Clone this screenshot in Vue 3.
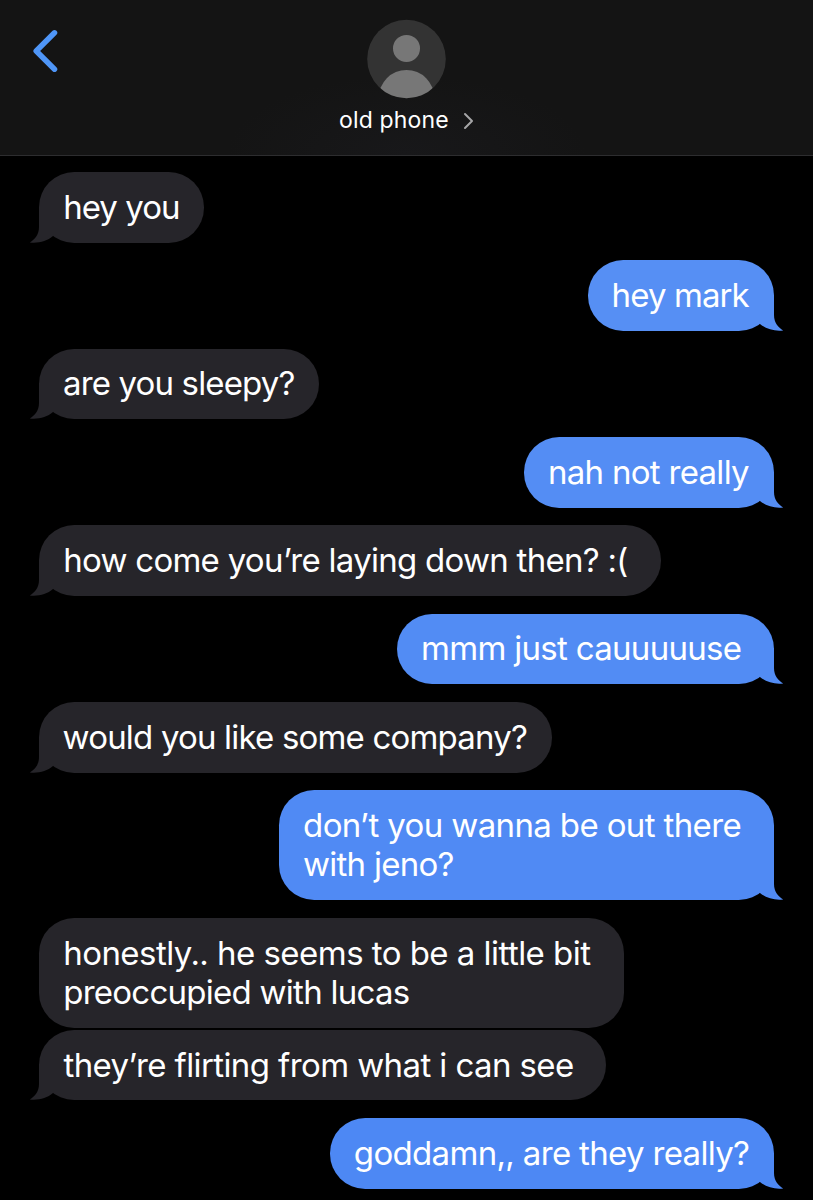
<script setup>
const FAMILY = 'Inter, "Liberation Sans", sans-serif'
const ctx = document.createElement('canvas').getContext('2d')

// Tracks a line so that its glyphs start at `inset` and span `span` pixels.
function fit(text, size, inset, span) {
  ctx.font = `400 ${size}px ${FAMILY}`
  const m = ctx.measureText(text)
  const natural = m.actualBoundingBoxLeft + m.actualBoundingBoxRight
  return {
    letterSpacing: ((span - natural) / (text.length - 1)).toFixed(3) + 'px',
    marginLeft: (inset + m.actualBoundingBoxLeft).toFixed(2) + 'px',
  }
}

const line = (text, span, inset = 25) => ({ text, style: fit(text, 33, inset, span) })

const GREY = '#26252a'

const messages = [
  { side: 'in', color: GREY, width: 165, lines: [line('hey you', 112.8, 26.2)] },
  { side: 'out', color: '#568ff4', width: 186, lines: [line('hey mark', 136, 25.8)] },
  { side: 'in', color: GREY, width: 280.2, lines: [line('are you sleepy?', 230.5)] },
  { side: 'out', color: '#548df4', width: 249.5, lines: [line('nah not really', 199.2, 25.6)] },
  { side: 'in', color: GREY, width: 622, lines: [line('how come you’re laying down then? :(', 562, 26.2)] },
  { side: 'out', color: '#528cf4', width: 377, lines: [line('mmm just cauuuuuse', 317.8, 26.2)] },
  { side: 'in', color: GREY, width: 512.5, lines: [line('would you like some company?', 463.3, 24.6)] },
  { side: 'out', color: '#508af4', width: 494.5, lines: [line('don’t you wanna be out there', 436.3, 24.8), line('with jeno?', 149.6, 24.7)] },
  { side: 'in', color: GREY, width: 585, joined: true, lines: [line('honestly.. he seems to be a little bit', 526, 26.2), line('preoccupied with lucas', 343.5, 26.2)] },
  { side: 'in', color: GREY, width: 567, lines: [line('they’re flirting from what i can see', 509.5, 24.5)] },
  { side: 'out', color: '#4d88f4', width: 444, lines: [line('goddamn,, are they really?', 394.3, 25)] },
]

const name = { text: 'old phone', style: fit('old phone', 23, 2, 108.3) }
</script>

<template>
  <div class="screen">
    <header class="header">
      <svg class="back" viewBox="0 0 30 46" width="30" height="46">
        <path d="M24.5 4.8 L6.2 23 L24.5 41.2" />
      </svg>
      <div class="contact">
        <svg class="avatar" viewBox="0 0 80 80" width="80" height="80">
          <defs>
            <clipPath id="disc"><circle cx="39.5" cy="40" r="39.3" /></clipPath>
          </defs>
          <circle cx="39.5" cy="40" r="39.3" fill="#333333" />
          <circle cx="39.5" cy="29.4" r="13.5" fill="#777777" />
          <circle cx="39.5" cy="78.8" r="27.8" fill="#777777" clip-path="url(#disc)" />
        </svg>
        <div class="name-row">
          <span class="name" :style="name.style">{{ name.text }}</span>
          <svg class="chevron" viewBox="0 0 12 18" width="12" height="18">
            <path d="M2 2 L9 9 L2 16" />
          </svg>
        </div>
      </div>
    </header>

    <main class="thread">
      <div
        v-for="(m, i) in messages"
        :key="i"
        class="bubble"
        :class="[m.side, { joined: m.joined }]"
        :style="{ width: m.width + 'px', backgroundColor: m.color }"
      >
        <p v-for="l in m.lines" :key="l.text" class="line" :style="l.style">{{ l.text }}</p>
        <svg v-if="!m.joined" class="tail" viewBox="0 0 24 36" width="24" height="36" :fill="m.color">
          <path d="M9 0 V20 C9 28 4.8 32.4 -0.2 35.4 C8 36.4 17 34.3 23 29 L24 28 V0 Z" />
        </svg>
      </div>
    </main>
  </div>
</template>

<style>
body {
  margin: 0;
  background: #000;
}
</style>

<style scoped>
.screen {
  width: 813px;
  height: 1200px;
  overflow: hidden;
  background: #000;
  color: #fff;
  font-family: Inter, "Liberation Sans", sans-serif;
}
.header {
  display: grid;
  grid-template-columns: 1fr auto 1fr;
  box-sizing: border-box;
  height: 156px;
  border-bottom: 1px solid #2d2d2f;
  background: radial-gradient(ellipse 180px 80px at 50% 100%, #18181a, #141414);
}
.back {
  margin: 28px 0 0 30px;
}
.back path {
  fill: none;
  stroke: #4f96f8;
  stroke-width: 5.5;
  stroke-linecap: round;
  stroke-linejoin: round;
}
.contact {
  grid-column: 2;
  display: flex;
  flex-direction: column;
  align-items: center;
  padding-top: 18.7px;
}
.avatar {
  display: block;
}
.name-row {
  display: flex;
  align-items: center;
  width: 137px;
  height: 28px;
  margin-top: 7.5px;
}
.name {
  margin-right: auto;
  font-size: 23px;
  line-height: 28px;
  white-space: nowrap;
}
.chevron {
  flex: none;
  margin-top: 2px;
}
.chevron path {
  fill: none;
  stroke: #a5a5a7;
  stroke-width: 2;
  stroke-linecap: round;
  stroke-linejoin: round;
}
.thread {
  display: flex;
  flex-direction: column;
  align-items: flex-start;
  gap: 17.95px;
  padding: 16.15px 39.2px 0 39px;
}
.bubble {
  position: relative;
  flex: none;
  box-sizing: border-box;
  padding: 15.55px 0;
  border-radius: 35.2px;
}
.bubble.out {
  align-self: flex-end;
}
.bubble.joined {
  margin-bottom: -15.6px;
}
.line {
  margin: 0;
  font-size: 33px;
  line-height: 39.3px;
  white-space: nowrap;
}
.tail {
  position: absolute;
  bottom: 0;
  left: -9px;
  overflow: visible;
}
.out .tail {
  left: auto;
  right: -9px;
  transform: scaleX(-1);
}
</style>
